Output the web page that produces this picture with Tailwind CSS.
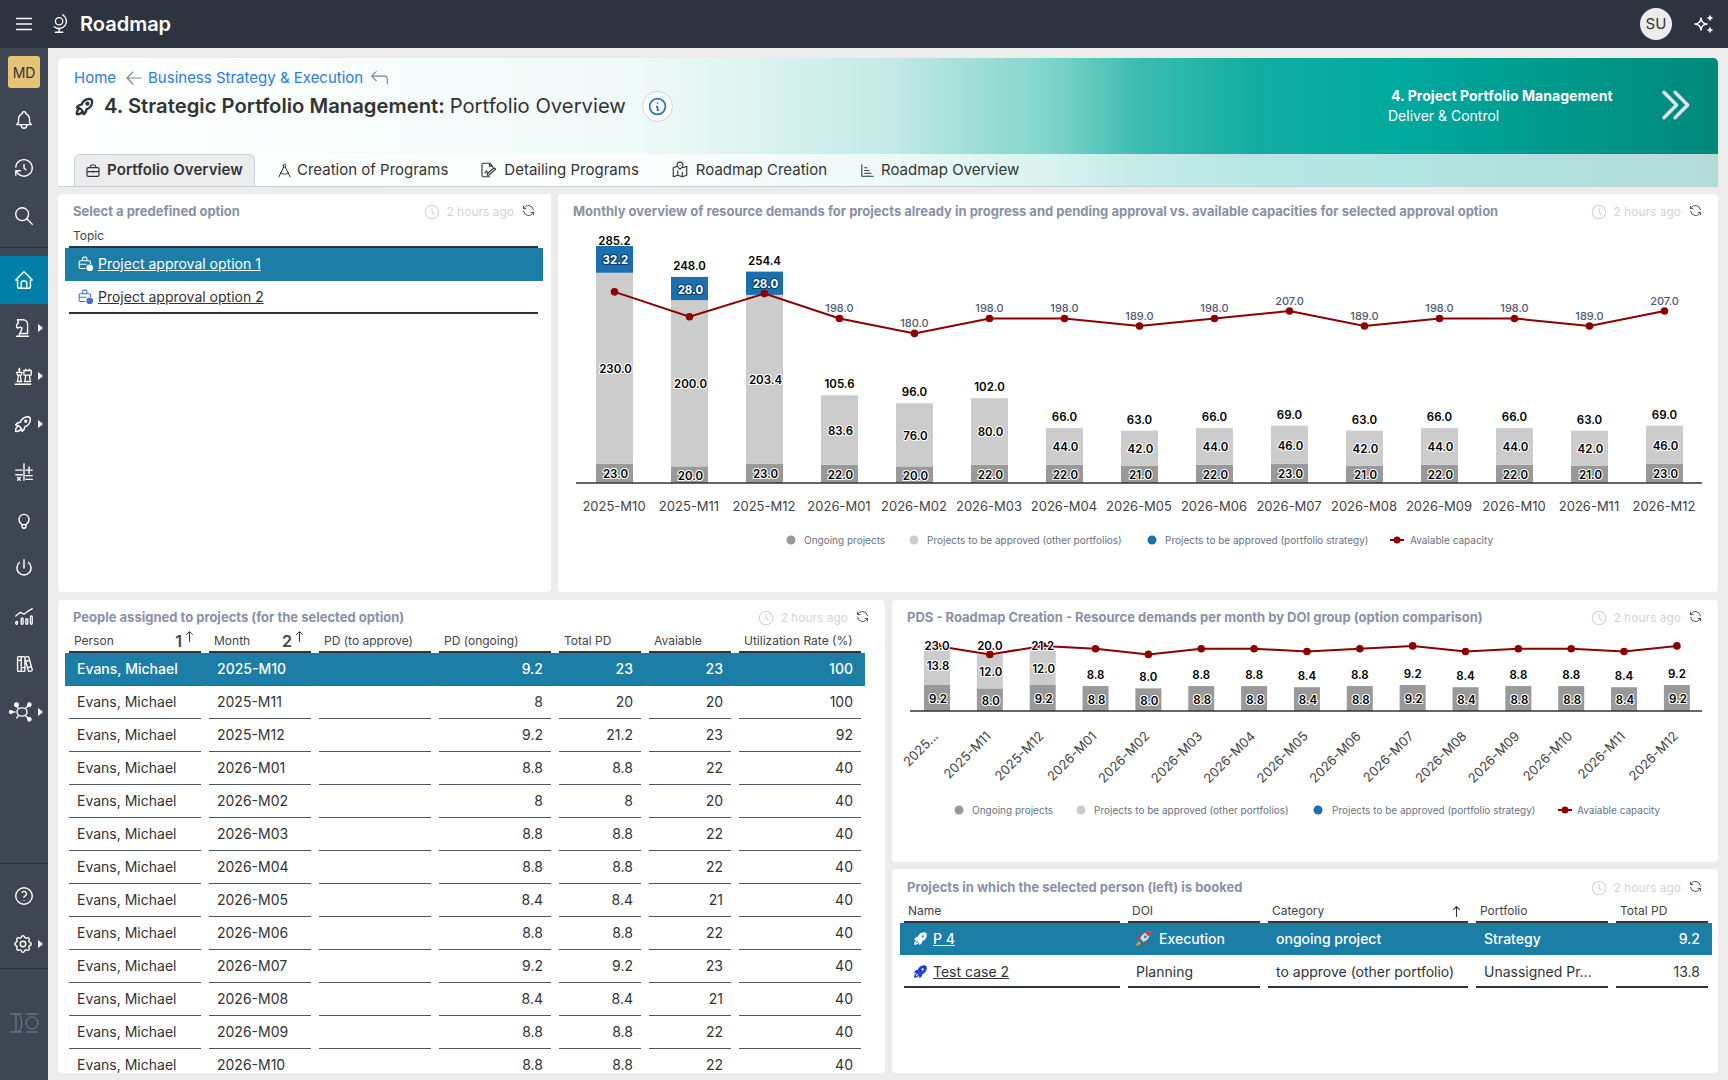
<!DOCTYPE html>
<html lang="en">

<head>
    <meta charset="UTF-8">
    <script src="https://cdn.jsdelivr.net/npm/@tailwindcss/browser@4"></script>
    <title>Roadmap</title>
</head>

<body class="bg-[#ececec] font-[Inter,sans-serif] text-[#333] w-[1728px] h-[1080px] overflow-hidden flex flex-col">
    <!-- top bar -->
    <header class="h-12 shrink-0 bg-[#2d333f] text-white flex items-center">
        <svg class="w-[22px] h-[22px] ml-[13px]" fill="none" stroke="currentColor" stroke-width="1.6" stroke-linecap="round" viewBox="0 0 24 24"><path d="M4 6h16M4 12h16M4 18h16" /></svg>
        <svg class="w-[22px] h-[22px] ml-[14px]" fill="none" stroke="currentColor" stroke-width="1.5" stroke-linecap="round" stroke-linejoin="round" viewBox="0 0 24 24"><path d="M7 9a4 4 0 1 0 8 0a4 4 0 0 0 -8 0M5.750 15a8.015 8.015 0 1 0 9.250 -13M11 17v4M7 21h8" /></svg>
        <span class="ml-[9px] text-[20px] font-semibold">Roadmap</span>
        <div class="ml-auto w-8 h-8 rounded-full bg-[#ececec] text-[#333] text-[15px] flex items-center justify-center">SU</div>
        <svg class="w-[24px] h-[24px] ml-[20px] mr-[12px]" fill="none" stroke="currentColor" stroke-width="1.5" stroke-linejoin="round" viewBox="0 0 24 24"><path d="M16 18a2 2 0 0 1 2 2a2 2 0 0 1 2 -2a2 2 0 0 1 -2 -2a2 2 0 0 1 -2 2zm0 -12a2 2 0 0 1 2 2a2 2 0 0 1 2 -2a2 2 0 0 1 -2 -2a2 2 0 0 1 -2 2zm-7 12a6 6 0 0 1 6 -6a6 6 0 0 1 -6 -6a6 6 0 0 1 -6 6a6 6 0 0 1 6 6z" /></svg>
    </header>

    <div class="flex flex-1 min-h-0">
        <!-- sidebar -->
        <nav class="w-12 shrink-0 bg-[#3e4653] text-white flex flex-col [&_svg.ic]:w-[22px] [&_svg.ic]:h-[22px]">
            <div class="mt-2 mx-2 h-8 rounded-[3px] bg-[#e6c274] text-[#333] text-[14px] flex items-center justify-center">MD</div>
            <div class="mt-2 h-12 flex items-center justify-center">
                <svg class="ic" fill="none" stroke="currentColor" stroke-width="1.5" stroke-linecap="round" stroke-linejoin="round" viewBox="0 0 24 24"><path d="M10 5a2 2 0 1 1 4 0a7 7 0 0 1 4 6v3a4 4 0 0 0 2 3h-16a4 4 0 0 0 2 -3v-3a7 7 0 0 1 4 -6M9 17v1a3 3 0 0 0 6 0v-1" /></svg>
            </div>
            <div class="h-12 flex items-center justify-center">
                <svg class="ic" fill="none" stroke="currentColor" stroke-width="1.5" stroke-linecap="round" stroke-linejoin="round" viewBox="0 0 24 24"><path d="M12 8l0 4l2 2M3.050 11a9 9 0 1 1 .5 4m-.5 5v-5h5" /></svg>
            </div>
            <div class="h-12 flex items-center justify-center">
                <svg class="ic" fill="none" stroke="currentColor" stroke-width="1.5" stroke-linecap="round" stroke-linejoin="round" viewBox="0 0 24 24"><path d="M3 10a7 7 0 1 0 14 0a7 7 0 1 0 -14 0M21 21l-6 -6" /></svg>
            </div>
            <div class="mt-[7px] mb-2 border-t border-[#2d333f]"></div>
            <div class="h-12 bg-[#0080a8] flex items-center justify-center">
                <svg class="ic" fill="none" stroke="currentColor" stroke-width="1.6" stroke-linecap="round" stroke-linejoin="round" viewBox="0 0 24 24"><path d="M5 12l-2 0l9 -9l9 9l-2 0M5 12v7a2 2 0 0 0 2 2h10a2 2 0 0 0 2 -2v-7M9 21v-6a2 2 0 0 1 2 -2h2a2 2 0 0 1 2 2v6" /></svg>
            </div>
            <div class="relative h-12 flex items-center justify-center">
                <svg class="ic -ml-0.5" fill="none" stroke="currentColor" stroke-width="1.5" stroke-linecap="round" stroke-linejoin="round" viewBox="0 0 24 24"><path d="M5 21h13M8 18h9V8a5 5 0 0 0-5-5H6l1 3-2 3v2l1 1 3-1 2 1-3 8" /></svg>
                <span class="absolute right-[5px] top-[20px] border-y-4 border-l-[5px] border-y-transparent border-l-white"></span>
            </div>
            <div class="relative h-12 flex items-center justify-center">
                <svg class="ic -ml-0.5" fill="none" stroke="currentColor" stroke-width="1.4" stroke-linejoin="round" viewBox="0 0 24 24"><path d="M3 21h18M5 18h6M6 18l1-7h2l1 7M5 8h6l-1 3H6zM8 3v5M6.500 5h3M13 18h8M14 18l1-7h4l1 7M13 6h8v5h-8zM15 6V4M19 6V4" /></svg>
                <span class="absolute right-[5px] top-[20px] border-y-4 border-l-[5px] border-y-transparent border-l-white"></span>
            </div>
            <div class="relative h-12 flex items-center justify-center">
                <svg class="ic -ml-0.5" fill="none" stroke="currentColor" stroke-width="1.6" stroke-linecap="round" stroke-linejoin="round" viewBox="0 0 24 24"><path d="M4 13a8 8 0 0 1 7 7a6 6 0 0 0 3 -5a9 9 0 0 0 6 -8a3 3 0 0 0 -3 -3a9 9 0 0 0 -8 6a6 6 0 0 0 -5 3M7 14a6 6 0 0 0 -3 6a6 6 0 0 0 6 -3M14 9a1 1 0 1 0 2 0a1 1 0 1 0 -2 0" /></svg>
                <span class="absolute right-[5px] top-[20px] border-y-4 border-l-[5px] border-y-transparent border-l-white"></span>
            </div>
            <div class="h-12 flex items-center justify-center">
                <svg class="ic" fill="none" stroke="currentColor" stroke-width="1.5" stroke-linecap="round" viewBox="0 0 24 24"><path d="M12 3v18M3 10h7M14 10h7M17.500 6.500v7M3 15h7M5 18l3 3M8 18l-3 3M14 16h7M14 20h7" /></svg>
            </div>
            <div class="h-12 flex items-center justify-center">
                <svg class="ic" fill="none" stroke="currentColor" stroke-width="1.5" stroke-linecap="round" stroke-linejoin="round" viewBox="0 0 24 24"><path d="M9 16a5.500 5.500 0 1 1 6 0a3.500 3.500 0 0 0 -1 3a2 2 0 0 1 -4 0a3.500 3.500 0 0 0 -1 -3M9.700 17l4.600 0" /></svg>
            </div>
            <div class="h-12 flex items-center justify-center">
                <svg class="ic" fill="none" stroke="currentColor" stroke-width="1.6" stroke-linecap="round" viewBox="0 0 24 24"><path d="M7 6a7.750 7.750 0 1 0 10 0M12 3l0 9" /></svg>
            </div>
            <div class="h-12 flex items-center justify-center">
                <svg class="ic" fill="none" stroke="currentColor" stroke-width="1.4" stroke-linecap="round" stroke-linejoin="round" viewBox="0 0 24 24"><path d="M3 12l5-4 4 2 4-3 5-3M3 19a1 1 0 0 1 2 0v1a1 1 0 0 1-2 0zM9 15a1 1 0 0 1 2 0v5a1 1 0 0 1-2 0zM14 16a1 1 0 0 1 2 0v4a1 1 0 0 1-2 0zM19 13a1 1 0 0 1 2 0v7a1 1 0 0 1-2 0z" /></svg>
            </div>
            <div class="h-12 flex items-center justify-center">
                <svg class="ic" fill="none" stroke="currentColor" stroke-width="1.5" stroke-linecap="round" stroke-linejoin="round" viewBox="0 0 24 24"><path d="M5 5a1 1 0 0 1 1 -1h2a1 1 0 0 1 1 1v14a1 1 0 0 1 -1 1h-2a1 1 0 0 1 -1 -1zM9 5a1 1 0 0 1 1 -1h2a1 1 0 0 1 1 1v14a1 1 0 0 1 -1 1h-2a1 1 0 0 1 -1 -1zM5 8h4M9 16h4M13.803 4.560l2.184 -.53c.562 -.135 1.133 .19 1.282 .732l3.695 13.418a1.020 1.020 0 0 1 -.634 1.219l-.133 .041l-2.184 .53c-.562 .135 -1.133 -.19 -1.282 -.732l-3.695 -13.418a1.020 1.020 0 0 1 .634 -1.219l.133 -.041zM14 9l4 -1M16 16l3.923 -.98" /></svg>
            </div>
            <div class="relative h-12 flex items-center justify-center">
                <svg class="w-[26px] h-[22px] -ml-1" fill="none" stroke="currentColor" stroke-width="1.5" viewBox="0 0 28 24"><path d="M1 12h6" /><circle cx="2" cy="12" r="1.500" fill="currentColor" /><ellipse cx="14" cy="12" rx="5.500" ry="4.500" /><path d="M10 8L8 5M18 8l3-3M18 16l3 3M10 16l-2 3" /><circle cx="8" cy="4" r="2" fill="currentColor" /><circle cx="22" cy="4" r="1.800" fill="currentColor" /><circle cx="22" cy="20" r="1.800" fill="currentColor" /></svg>
                <span class="absolute right-[5px] top-[20px] border-y-4 border-l-[5px] border-y-transparent border-l-white"></span>
            </div>
            <div class="mt-auto border-t border-[#2d333f]"></div>
            <div class="mt-2 h-12 flex items-center justify-center">
                <svg class="ic" fill="none" stroke="currentColor" stroke-width="1.5" stroke-linecap="round" stroke-linejoin="round" viewBox="0 0 24 24"><path d="M3 12a9 9 0 1 0 18 0a9 9 0 1 0 -18 0M12 17v.01M12 13.500a1.500 1.500 0 0 1 1 -1.500a2.600 2.600 0 1 0 -3 -4" /></svg>
            </div>
            <div class="relative h-12 flex items-center justify-center">
                <svg class="ic -ml-0.5" fill="none" stroke="currentColor" stroke-width="1.5" stroke-linecap="round" stroke-linejoin="round" viewBox="0 0 24 24"><path d="M10.325 4.317c.426 -1.756 2.924 -1.756 3.350 0a1.724 1.724 0 0 0 2.573 1.066c1.543 -.94 3.310 .826 2.370 2.370a1.724 1.724 0 0 0 1.065 2.572c1.756 .426 1.756 2.924 0 3.350a1.724 1.724 0 0 0 -1.066 2.573c.94 1.543 -.826 3.310 -2.370 2.370a1.724 1.724 0 0 0 -2.572 1.065c-.426 1.756 -2.924 1.756 -3.350 0a1.724 1.724 0 0 0 -2.573 -1.066c-1.543 .94 -3.310 -.826 -2.370 -2.370a1.724 1.724 0 0 0 -1.065 -2.572c-1.756 -.426 -1.756 -2.924 0 -3.350a1.724 1.724 0 0 0 1.066 -2.573c-.94 -1.543 .826 -3.310 2.370 -2.370c1 .608 2.296 .07 2.572 -1.065zM9 12a3 3 0 1 0 6 0a3 3 0 0 0 -6 0" /></svg>
                <span class="absolute right-[5px] top-[20px] border-y-4 border-l-[5px] border-y-transparent border-l-white"></span>
            </div>
            <div class="border-t border-[#2d333f]"></div>
            <div class="mt-[43px] mb-[46px] flex justify-center">
                <svg class="w-[30px] h-[22px]" fill="none" stroke="#75849c" stroke-width="1" viewBox="0 0 30 22"><path d="M1 2h12M1 20h12M7 2v18M9 20c5-3 5-15 0-18M17 2h12M17 20h12M23 5a6 6 0 1 0 .1 0z" /></svg>
            </div>
        </nav>

        <!-- content -->
        <main class="flex-1 min-w-0 pt-[10px] pl-[10px] pr-[10px] flex flex-col">
            <section class="h-[128px] shrink-0 rounded-t-[5px] bg-[linear-gradient(90deg,#fff_0%,#f0faf8_35%,#c5eae6_50%,#7dd4ca_60%,#3dbcb0_65%,#14ada2_72%,#00a99d_81%,#00897b_100%)] flex flex-col">
                <div class="h-24 shrink-0 flex">
                    <div class="pl-4 pt-[10px]">
                        <div class="flex items-center h-5 text-[15px] text-[#2b7de0]">
                            <span>Home</span>
                            <svg class="w-6 h-6 ml-[6px] text-[#7a8496]" fill="none" stroke="currentColor" stroke-width="1.100" stroke-linecap="round" stroke-linejoin="round" viewBox="0 0 24 24"><path d="M5 12h14M5 12l6 6M5 12l6 -6" /></svg>
                            <span class="ml-[2px]">Business Strategy &amp; Execution</span>
                            <svg class="w-[22px] h-[22px] ml-[5px] text-[#7a8496]" fill="none" stroke="currentColor" stroke-width="1.200" stroke-linecap="round" stroke-linejoin="round" viewBox="0 0 24 24"><path d="M21 18v-5a3 3 0 0 0-3-3H4m5-5l-5 5 5 5" /></svg>
                        </div>
                        <div class="flex items-center mt-[1px] h-[34px] text-[20.250px] text-[#333]">
                            <svg class="w-[23px] h-[23px] -ml-[1px] text-[#2d333f]" fill="none" stroke="currentColor" stroke-width="2.400" stroke-linecap="round" stroke-linejoin="round" viewBox="0 0 24 24"><path d="M4 13a8 8 0 0 1 7 7a6 6 0 0 0 3 -5a9 9 0 0 0 6 -8a3 3 0 0 0 -3 -3a9 9 0 0 0 -8 6a6 6 0 0 0 -5 3M7 14a6 6 0 0 0 -3 6a6 6 0 0 0 6 -3M14 9a1 1 0 1 0 2 0a1 1 0 1 0 -2 0" /></svg>
                            <span class="ml-[8px] font-semibold">4. Strategic Portfolio Management:</span>
                            <span class="ml-[5px]">Portfolio Overview</span>
                            <div class="ml-[16px] w-[31px] h-[31px] rounded-full bg-white border border-[#c9d6ea] flex items-center justify-center text-[#1f74e0]">
                                <svg class="w-[21px] h-[21px]" fill="none" stroke="currentColor" stroke-width="2" stroke-linecap="round" stroke-linejoin="round" viewBox="0 0 24 24"><path d="M3 12a9 9 0 1 0 18 0a9 9 0 0 0 -18 0M12 8h.01M11 12h1v4h1" /></svg>
                            </div>
                        </div>
                    </div>
                    <div class="ml-auto text-white text-[14px] w-[330px] pt-[28px] relative">
                        <div class="font-bold pl-[3px] leading-5 tracking-[0.05px]">4. Project Portfolio Management</div>
                        <div class="leading-5">Deliver &amp; Control</div>
                        <svg class="absolute right-[24px] top-[28px] w-[38px] h-[38px] text-[#dfe4ee]" fill="none" stroke="currentColor" stroke-width="2.200" stroke-linecap="round" stroke-linejoin="round" viewBox="0 0 24 24"><path d="M5 4l8 8l-8 8M12 4l8 8l-8 8" /></svg>
                    </div>
                </div>
                <div class="flex-1 bg-white/70 border-b border-[#c5d0da] flex pl-4 text-[15px]">
                    <div class="w-[181px] h-[32px] rounded-t-[6px] bg-[#ececec] border border-b-0 border-[#c5d0da] flex items-center pl-[10px] font-semibold">
                        <svg class="w-[16px] h-[16px] text-[#2d333f]" fill="none" stroke="currentColor" stroke-width="1.700" stroke-linecap="round" stroke-linejoin="round" viewBox="0 0 24 24"><path d="M3 9a2 2 0 0 1 2 -2h14a2 2 0 0 1 2 2v9a2 2 0 0 1 -2 2h-14a2 2 0 0 1 -2 -2zM8 7v-2a2 2 0 0 1 2 -2h4a2 2 0 0 1 2 2v2M3 13h18M12 12v2" /></svg>
                        <span class="ml-[6px] tracking-[0.1px]">Portfolio Overview</span>
                    </div>
                    <div class="flex items-center ml-[21px]">
                        <svg class="w-[17px] h-[17px]" fill="none" stroke="currentColor" stroke-width="1.400" stroke-linecap="round" stroke-linejoin="round" viewBox="0 0 24 24"><path d="M10 5a2 2 0 1 0 4 0a2 2 0 1 0-4 0M11 7L4 21M13 7l7 14M6 15c4 3 8 3 12 0" /></svg>
                        <span class="ml-[4px]">Creation of Programs</span>
                    </div>
                    <div class="flex items-center ml-[31px]">
                        <svg class="w-[18px] h-[18px]" fill="none" stroke="currentColor" stroke-width="1.500" stroke-linecap="round" stroke-linejoin="round" viewBox="0 0 24 24"><path d="M18 8V7l-4-4H6a2 2 0 0 0-2 2v14a2 2 0 0 0 2 2h8M14 3v4h4M11 17l9-8 2 2-9 8h-2zM8 16l2-3 1 2" /></svg>
                        <span class="ml-[7px]">Detailing Programs</span>
                    </div>
                    <div class="flex items-center ml-[32px]">
                        <svg class="w-[18px] h-[18px]" fill="none" stroke="currentColor" stroke-width="1.500" stroke-linecap="round" stroke-linejoin="round" viewBox="0 0 24 24"><path d="M8 7L3 9v12l6-2 6 2 6-2V7l-5 2M9 13v6M15 15v6M12 11S8 8 8 5.500a4 4 0 0 1 8 0C16 8 12 11 12 11zM12 5.500v.01" /></svg>
                        <span class="ml-[7px]">Roadmap Creation</span>
                    </div>
                    <div class="flex items-center ml-[32px]">
                        <svg class="w-[17px] h-[17px]" fill="none" stroke="currentColor" stroke-width="1.500" stroke-linecap="round" viewBox="0 0 24 24"><path d="M4 4v16h16M8 8h3M8 12h6M8 16h9" /></svg>
                        <span class="ml-[5px]">Roadmap Overview</span>
                    </div>
                </div>
            </section>

            <div class="mt-2 h-[398px] shrink-0 grid grid-cols-[493px_1160px] gap-x-[7px]">
                <section class="bg-white rounded-[4px]">
                    <div class="h-8 pt-1 pl-[15px] pr-[15px] flex items-center justify-between">
                        <h2 class="text-[13px] font-bold text-[#8a91a5]">Select a predefined option</h2>
                        <div data-stamp></div>
                    </div>
                    <div class="ml-[11px] mr-[13px] h-5 border-b-2 border-[#2d333f] box-content pl-[4px] flex items-center text-[12px] text-[#444]">Topic</div>
                    <div class="ml-[7px] mr-[8px] pl-[4px] bg-[#1c7ea6] text-white">
                        <div class="h-[33px] pl-[8px] pb-[2px] flex items-center gap-[4px] text-[14px]">
                            <svg class="w-[17px] h-[17px]" fill="none" stroke="currentColor" stroke-width="1.500" stroke-linecap="round" stroke-linejoin="round" viewBox="0 0 24 24"><path d="M11 19H5a2 2 0 0 1-2-2v-7a2 2 0 0 1 2-2h12a2 2 0 0 1 2 2v2M8 8V5a2 2 0 0 1 2-2h2a2 2 0 0 1 2 2v3M3 13h10" /><circle cx="18" cy="18" r="4" fill="currentColor" /></svg>
                            <span class="underline">Project approval option 1</span>
                        </div>
                    </div>
                    <div class="ml-[11px] mr-[13px] h-[33px] pl-[8px] border-b-2 border-[#2d333f] flex items-center gap-[4px] text-[14px]">
                        <svg class="w-[17px] h-[17px] text-[#4a6fc8]" fill="none" stroke="currentColor" stroke-width="1.500" stroke-linecap="round" stroke-linejoin="round" viewBox="0 0 24 24"><path d="M11 19H5a2 2 0 0 1-2-2v-7a2 2 0 0 1 2-2h12a2 2 0 0 1 2 2v2M8 8V5a2 2 0 0 1 2-2h2a2 2 0 0 1 2 2v3M3 13h10" /><circle cx="18" cy="18" r="4" fill="currentColor" /></svg>
                        <span class="underline">Project approval option 2</span>
                    </div>
                </section>
                <section class="bg-white rounded-[4px] overflow-hidden">
                    <div class="h-8 pt-1 pl-[15px] pr-[15px] flex items-center justify-between">
                        <h2 class="text-[13px] font-bold text-[#8a91a5]">Monthly overview of resource demands for projects already in progress and pending approval vs. available capacities for selected approval option</h2>
                        <div data-stamp></div>
                    </div>
                    <svg id="chart-main" class="block" width="1160" height="366" viewBox="558 226 1160 366"></svg>
                </section>
            </div>

            <div class="mt-2 flex-1 min-h-0 mb-[7px] grid grid-cols-[827px_826px] gap-x-[7px]">
                <section class="bg-white rounded-[4px] overflow-hidden">
                    <div class="h-8 pt-1 pl-[15px] pr-[15px] flex items-center justify-between">
                        <h2 class="text-[13px] font-bold text-[#8a91a5]">People assigned to projects (for the selected option)</h2>
                        <div data-stamp></div>
                    </div>
                    <div class="w-[792px] ml-[11px]">
                        <div class="grid grid-cols-[132px_102px_112px_112px_82px_82px_122px] gap-x-2 text-[12px] text-[#444]">
                            <div class="h-[21px] border-b-2 border-[#2d333f] pl-[5px] pb-[2px] flex items-center">Person<span class="ml-auto pr-[5px] flex items-start"><b class="text-[16px] leading-4 font-semibold">1</b><svg class="w-[13px] h-[13px] -mt-[3px] ml-[1px] text-[#2d333f]" fill="none" stroke="currentColor" stroke-width="1.800" viewBox="0 0 24 24"><path d="M12 22V3M6 9l6-6 6 6" /></svg></span></div>
                            <div class="h-[21px] border-b-2 border-[#2d333f] pl-[5px] pb-[2px] flex items-center">Month<span class="ml-auto pr-[5px] flex items-start"><b class="text-[16px] leading-4 font-semibold">2</b><svg class="w-[13px] h-[13px] -mt-[3px] ml-[1px] text-[#2d333f]" fill="none" stroke="currentColor" stroke-width="1.800" viewBox="0 0 24 24"><path d="M12 22V3M6 9l6-6 6 6" /></svg></span></div>
                            <div class="h-[21px] border-b-2 border-[#2d333f] pl-[5px] pb-[2px] flex items-center">PD (to approve)</div>
                            <div class="h-[21px] border-b-2 border-[#2d333f] pl-[5px] pb-[2px] flex items-center">PD (ongoing)</div>
                            <div class="h-[21px] border-b-2 border-[#2d333f] pl-[5px] pb-[2px] flex items-center">Total PD</div>
                            <div class="h-[21px] border-b-2 border-[#2d333f] pl-[5px] pb-[2px] flex items-center">Avaiable</div>
                            <div class="h-[21px] border-b-2 border-[#2d333f] pl-[5px] pb-[2px] flex items-center">Utilization Rate (%)</div>
                        </div>
                        <div id="people-rows"></div>
                    </div>
                </section>
                <div class="flex flex-col gap-y-[7px] min-h-0">
                    <section class="h-[262px] shrink-0 bg-white rounded-[4px] overflow-hidden">
                        <div class="h-8 pt-1 pl-[15px] pr-[15px] flex items-center justify-between">
                            <h2 class="text-[13px] font-bold text-[#8a91a5]">PDS - Roadmap Creation - Resource demands per month by DOI group (option comparison)</h2>
                            <div data-stamp></div>
                        </div>
                        <svg id="chart-doi" class="block" width="826" height="230" viewBox="892 632 826 230"></svg>
                    </section>
                    <section class="flex-1 bg-white rounded-[4px] overflow-hidden">
                        <div class="h-[33px] pt-1 pl-[15px] pr-[15px] flex items-center justify-between">
                            <h2 class="text-[13px] font-bold text-[#8a91a5]">Projects in which the selected person (left) is booked</h2>
                            <div data-stamp></div>
                        </div>
                        <div class="w-[804px] ml-3">
                            <div class="grid grid-cols-[216px_132px_200px_132px_92px] gap-x-2 text-[12px] text-[#444]">
                                <div class="h-[21px] border-b-2 border-[#2d333f] pl-[4px] pb-[1px] flex items-center">Name</div>
                                <div class="h-[21px] border-b-2 border-[#2d333f] pl-[4px] pb-[1px] flex items-center">DOI</div>
                                <div class="h-[21px] border-b-2 border-[#2d333f] pl-[4px] pb-[1px] flex items-center">Category<svg class="ml-auto mr-[5px] w-[13px] h-[13px] text-[#2d333f]" fill="none" stroke="currentColor" stroke-width="2" viewBox="0 0 24 24"><path d="M12 22V3M6 9l6-6 6 6" /></svg></div>
                                <div class="h-[21px] border-b-2 border-[#2d333f] pl-[4px] pb-[1px] flex items-center">Portfolio</div>
                                <div class="h-[21px] border-b-2 border-[#2d333f] pl-[4px] pb-[1px] flex items-center">Total PD</div>
                            </div>
                            <div class="-mx-1 px-1 bg-[#1c7ea6] text-white font-medium">
                                <div class="grid grid-cols-[216px_132px_200px_132px_92px] gap-x-2 text-[14px]">
                                    <div class="h-[32px] pl-[8px] pb-[1px] flex items-center gap-[4px]">
                                        <svg class="w-[17px] h-[17px]" viewBox="0 0 24 24" fill="none" stroke="currentColor" stroke-width="1.800" stroke-linejoin="round"><path fill="currentColor" d="M4 13a8 8 0 0 1 7 7a6 6 0 0 0 3-5a9 9 0 0 0 6-8a3 3 0 0 0-3-3a9 9 0 0 0-8 6a6 6 0 0 0-5 3z" /><path d="M7 15a5 5 0 0 0-3 5a5 5 0 0 0 5-3" /><circle cx="15" cy="9" r="1.500" fill="#1c7ea6" stroke="none" /></svg>
                                        <span class="underline">P 4</span>
                                    </div>
                                    <div class="h-[32px] pl-[6px] pb-[1px] flex items-center gap-[7px]">
                                        <svg class="w-[18px] h-[18px]" viewBox="0 0 24 24"><path d="M22 2c-6 0-11 3-14 9l5 5c6-3 9-8 9-14z" fill="#d7dde3" /><path d="M22 2c-3 0-5 .6-7 2l5 5c1.400-2 2-4 2-7z" fill="#d8362a" /><path d="M8 11l-5 2 3-5 4-1zM13 16l-2 5 5-3 1-4z" fill="#d8362a" /><path d="M7 15c-3 1-4 4-4 6 2 0 5-1 6-4z" fill="#f59e0b" /><circle cx="15" cy="9" r="2" fill="#3b82c4" /></svg>
                                        <span>Execution</span>
                                    </div>
                                    <div class="h-[32px] pl-[8px] pb-[1px] flex items-center">ongoing project</div>
                                    <div class="h-[32px] pl-[8px] pb-[1px] flex items-center">Strategy</div>
                                    <div class="h-[32px] pr-[8px] pb-[1px] flex items-center justify-end">9.2</div>
                                </div>
                            </div>
                            <div class="grid grid-cols-[216px_132px_200px_132px_92px] gap-x-2 text-[14px]">
                                <div class="h-[33px] pl-[8px] pt-[1px] border-b-2 border-[#2d333f] flex items-center gap-[4px]">
                                    <svg class="w-[17px] h-[17px] text-[#1d3fe0]" viewBox="0 0 24 24" fill="none" stroke="currentColor" stroke-width="1.800" stroke-linejoin="round"><path fill="currentColor" d="M4 13a8 8 0 0 1 7 7a6 6 0 0 0 3-5a9 9 0 0 0 6-8a3 3 0 0 0-3-3a9 9 0 0 0-8 6a6 6 0 0 0-5 3z" /><path d="M7 15a5 5 0 0 0-3 5a5 5 0 0 0 5-3" /><circle cx="15" cy="9" r="1.500" fill="#fff" stroke="none" /></svg>
                                    <span class="underline">Test case 2</span>
                                </div>
                                <div class="h-[33px] pl-[8px] pt-[1px] border-b-2 border-[#2d333f] flex items-center">Planning</div>
                                <div class="h-[33px] pl-[8px] pt-[1px] border-b-2 border-[#2d333f] flex items-center">to approve (other portfolio)</div>
                                <div class="h-[33px] pl-[8px] pt-[1px] border-b-2 border-[#2d333f] flex items-center">Unassigned Pr...</div>
                                <div class="h-[33px] pr-[8px] pt-[1px] border-b-2 border-[#2d333f] flex items-center justify-end">13.8</div>
                            </div>
                        </div>
                    </section>
                </div>
            </div>
        </main>
    </div>

    <script>
        const stamp = `<div class="flex items-center text-[12px] text-[#d1d5db]">
            <svg class="w-[18px] h-[18px]" fill="none" stroke="currentColor" stroke-width="1.500" stroke-linecap="round" stroke-linejoin="round" viewBox="0 0 24 24"><path d="M3 12a9 9 0 1 0 18 0a9 9 0 0 0 -18 0M12 7v5l3 3" /></svg>
            <span class="ml-[5px]">2 hours ago</span>
            <svg class="w-[15px] h-[15px] ml-[7px] -mt-[3px] text-[#4b5563]" fill="none" stroke="currentColor" stroke-width="1.600" stroke-linecap="round" stroke-linejoin="round" viewBox="0 0 24 24"><path d="M20 11a8.100 8.100 0 0 0 -15.500 -2m-.5 -4v4h4M4 13a8.100 8.100 0 0 0 15.500 2m.5 4v-4h-4" /></svg>
        </div>`;
        document.querySelectorAll('[data-stamp]').forEach(el => { el.innerHTML = stamp; });

        const months = ['2025-M10', '2025-M11', '2025-M12', '2026-M01', '2026-M02', '2026-M03', '2026-M04', '2026-M05', '2026-M06', '2026-M07', '2026-M08', '2026-M09', '2026-M10', '2026-M11', '2026-M12'];
        const COLORS = { ongoing: '#999999', other: '#cccccc', strategy: '#1a6fb0', line: '#8b0000' };

        // halo labels sit on top of the bars
        const label = (x, y, txt, fill = '#000', halo = '#fff', weight = 600, size = 11.5) =>
            `<text x="${x}" y="${y + 5}" text-anchor="middle" font-size="${size}" font-weight="${weight}" fill="${fill}" stroke="${halo}" stroke-width="${halo === 'none' ? 0 : 2.2}" paint-order="stroke" stroke-linejoin="round">${txt}</text>`;

        const legend = (items, y) => {
            const names = ['Ongoing projects', 'Projects to be approved (other portfolios)', 'Projects to be approved (portfolio strategy)', 'Avaiable capacity'];
            const fills = [COLORS.ongoing, COLORS.other, COLORS.strategy];
            return items.map(([dot, tx], i) => {
                const mark = i < 3
                    ? `<circle cx="${dot}" cy="${y}" r="4.500" fill="${fills[i]}"/>`
                    : `<path d="M${dot - 7} ${y}h14" stroke="${COLORS.line}" stroke-width="2"/><circle cx="${dot}" cy="${y}" r="3.500" fill="${COLORS.line}"/>`;
                return mark + `<text x="${tx}" y="${y + 4}" font-size="10" fill="#6b7280">${names[i]}</text>`;
            }).join('');
        };

        const drawChart = (o) => {
            let s = '';
            o.data.forEach((d, i) => {
                const cx = o.x0 + i * o.pitch;
                let y = o.base;
                const segs = [[d[0], COLORS.ongoing], [d[1], COLORS.other], [d[2], COLORS.strategy]];
                segs.forEach(([v, c]) => {
                    if (!v) return;
                    const h = v * o.scale;
                    s += `<rect x="${cx - o.bar / 2}" y="${y - h}" width="${o.bar}" height="${h}" fill="${c}"/>`;
                    y -= h;
                });
            });
            s += `<path d="M${o.axis[0]} ${o.base}H${o.axis[1]}" stroke="#2d333f" stroke-width="1.300"/>`;
            const pts = o.cap.map((v, i) => [o.x0 + i * o.pitch, o.base - v * o.scale]);
            s += `<polyline points="${pts.map(p => p.join(',')).join(' ')}" fill="none" stroke="${COLORS.line}" stroke-width="2"/>`;
            pts.forEach(p => { s += `<circle cx="${p[0]}" cy="${p[1]}" r="3.800" fill="${COLORS.line}"/>`; });
            o.data.forEach((d, i) => {
                const cx = o.x0 + i * o.pitch + 1;
                let y = o.base;
                d.forEach((v, k) => {
                    if (!v) return;
                    const h = v * o.scale;
                    s += k === 2 ? label(cx, y - h / 2, v.toFixed(1), '#fff', '#0c3f6b', 700) : label(cx, y - h / 2, v.toFixed(1));
                    y -= h;
                });
                const total = d[0] + d[1] + d[2];
                s += label(cx - 1, Math.max(o.topLimit, y - 12 + o.totalOff), total.toFixed(1), '#000', '#fff', 600);
                if (o.capLabels && i > 2) {
                    s += label(cx - 1, pts[i][1] - 11, (o.cap[i]).toFixed(1), '#505a70', 'none', 500, 11);
                }
            });
            return s + o.axisLabels() + legend(o.legendItems, o.legendY);
        };

        document.getElementById('chart-main').innerHTML = drawChart({
            data: [[23, 230, 32.2], [20, 200, 28], [23, 203.4, 28], [22, 83.6, 0], [20, 76, 0], [22, 80, 0], [22, 44, 0], [21, 42, 0], [22, 44, 0], [23, 46, 0], [21, 42, 0], [22, 44, 0], [22, 44, 0], [21, 42, 0], [23, 46, 0]],
            cap: [230, 200, 228, 198, 180, 198, 198, 189, 198, 207, 189, 198, 198, 189, 207],
            x0: 614.5, pitch: 75, bar: 37, base: 483, scale: 0.831, axis: [576, 1702], topLimit: 240, totalOff: 0, capLabels: true,
            axisLabels: () => months.map((m, i) => `<text x="${614 + i * 75}" y="511" text-anchor="middle" font-size="13" fill="#444">${m}</text>`).join(''),
            legendItems: [[791, 804], [914, 927], [1152, 1165], [1397, 1410]], legendY: 540,
        });

        document.getElementById('chart-doi').innerHTML = drawChart({
            data: [[9.2, 13.8, 0], [8, 12, 0], [9.2, 12, 0], [8.8, 0, 0], [8, 0, 0], [8.8, 0, 0], [8.8, 0, 0], [8.4, 0, 0], [8.8, 0, 0], [9.2, 0, 0], [8.4, 0, 0], [8.8, 0, 0], [8.8, 0, 0], [8.4, 0, 0], [9.2, 0, 0]],
            cap: [23, 20, 23, 22, 20, 22, 22, 21, 22, 23, 21, 22, 22, 21, 23],
            x0: 937, pitch: 52.85, bar: 26, base: 711, scale: 2.83, axis: [910, 1702], topLimit: 645, totalOff: 0, capLabels: false,
            axisLabels: () => months.map((m, i) => {
                const x = 937 + i * 52.85 + 2;
                return `<text x="${x}" y="737" text-anchor="end" font-size="13" fill="#444" transform="rotate(-45 ${x} 737)">${i === 0 ? '2025...' : m}</text>`;
            }).join(''),
            legendItems: [[959, 972], [1081, 1094], [1318, 1332], [1565, 1577]], legendY: 810,
        });

        const people = [
            ['2025-M10', 9.2, 23, 23, 100], ['2025-M11', 8, 20, 20, 100], ['2025-M12', 9.2, 21.2, 23, 92],
            ['2026-M01', 8.8, 8.8, 22, 40], ['2026-M02', 8, 8, 20, 40], ['2026-M03', 8.8, 8.8, 22, 40],
            ['2026-M04', 8.8, 8.8, 22, 40], ['2026-M05', 8.4, 8.4, 21, 40], ['2026-M06', 8.8, 8.8, 22, 40],
            ['2026-M07', 9.2, 9.2, 23, 40], ['2026-M08', 8.4, 8.4, 21, 40], ['2026-M09', 8.8, 8.8, 22, 40],
            ['2026-M10', 8.8, 8.8, 22, 40],
        ];
        document.getElementById('people-rows').innerHTML = people.map((r, i) => {
            const selected = i === 0;
            const cell = 'h-[33px] border-b border-[#4b5563] px-2 pb-[2px] flex items-center';
            const num = 'h-[33px] border-b border-[#4b5563] px-2 pb-[2px] flex items-center justify-end';
            const row = `<div class="grid grid-cols-[132px_102px_112px_112px_82px_82px_122px] gap-x-2 text-[14px]">
                <div class="${cell}">Evans, Michael</div><div class="${cell}">${r[0]}</div><div class="${cell}"></div>
                <div class="${num}">${r[1]}</div><div class="${num}">${r[2]}</div><div class="${num}">${r[3]}</div><div class="${num}">${r[4]}</div></div>`;
            return selected ? `<div class="-mx-1 px-1 bg-[#1c7ea6] text-white font-medium">${row}</div>` : row;
        }).join('');
    </script>
</body>

</html>
